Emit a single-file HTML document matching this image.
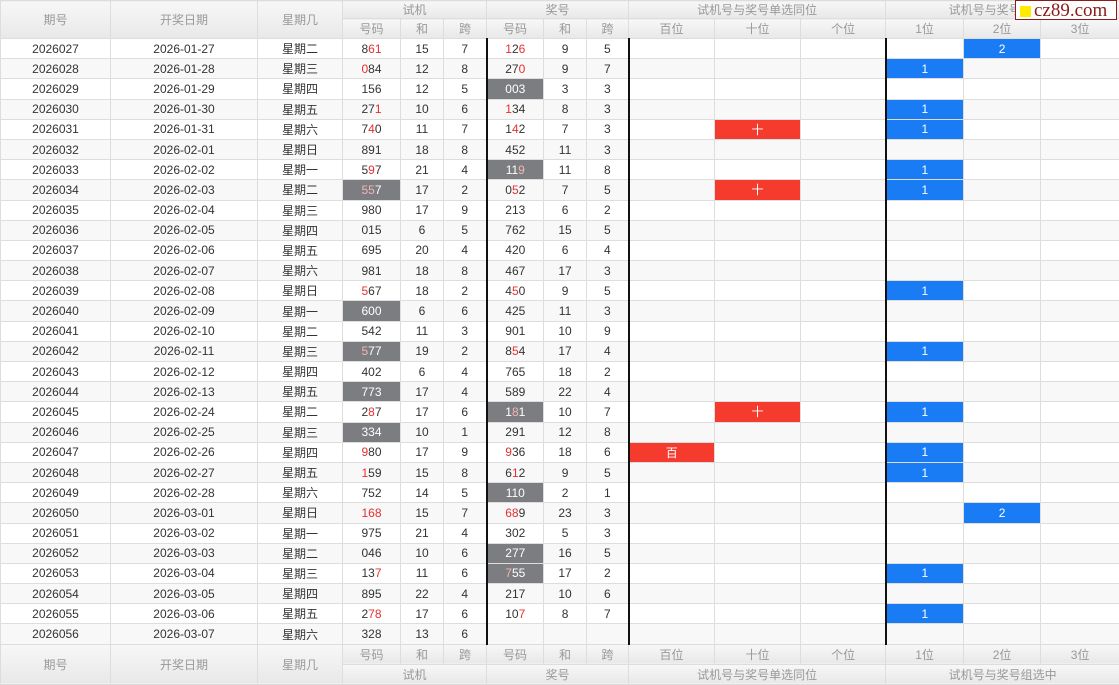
<!DOCTYPE html>
<html><head><meta charset="utf-8"><style>
body{margin:0;width:1119px;height:685px;overflow:hidden;background:#fff;font-family:"Liberation Sans","Noto Sans CJK SC",sans-serif;position:relative}
table{border-collapse:collapse;table-layout:fixed;width:1119px;font-size:12px;color:#333}
td,th{border:1px solid #ddd;text-align:center;padding:0;white-space:nowrap;overflow:hidden}
th{font-weight:normal;color:#999;background:linear-gradient(#f7f7f7,#e8e8e8);font-size:12px}
tr.h1 th{height:17px}
tr.h2 th{height:19px}
tbody tr{height:20.2px}
tbody tr:nth-child(even) td{background:#f8f8f8}
tbody td.g{background:#7b7d80!important;color:#fff}
tbody td.g i{color:#f5b5b5}
tbody td.b{background:#1a7cf5!important;color:#fff}
tbody td.r{background:#f53a2e!important;color:#fff}
i{font-style:normal;color:#e53030}
.L{border-left:2px solid #111!important}
tfoot th{height:19px}
.wm{position:absolute;left:1015px;top:0;width:102px;height:20px;border:1px solid #8b1a1a;background:#fff;font-family:"Liberation Serif",serif;font-size:19px;color:#8b1a1a;line-height:20px;box-sizing:border-box}
.wm b{display:inline-block;width:11px;height:11px;background:#ffea00;margin:0 3px 0 4px;vertical-align:-1px}
</style></head><body>
<table>
<colgroup><col style="width:110px"><col style="width:147px"><col style="width:85px"><col style="width:58px"><col style="width:43px"><col style="width:43px"><col style="width:57px"><col style="width:43px"><col style="width:42px"><col style="width:86px"><col style="width:86px"><col style="width:85px"><col style="width:78px"><col style="width:77px"><col style="width:79px"></colgroup>
<thead>
<tr class="h1"><th rowspan="2">期号</th><th rowspan="2">开奖日期</th><th rowspan="2">星期几</th><th colspan="3">试机</th><th colspan="3">奖号</th><th colspan="3">试机号与奖号单选同位</th><th colspan="3">试机号与奖号组选中</th></tr>
<tr class="h2"><th>号码</th><th>和</th><th>跨</th><th>号码</th><th>和</th><th>跨</th><th>百位</th><th>十位</th><th>个位</th><th>1位</th><th>2位</th><th>3位</th></tr>
</thead>
<tbody>
<tr><td>2026027</td><td>2026-01-27</td><td>星期二</td><td>8<i>61</i></td><td>15</td><td>7</td><td class="L"><i>1</i>2<i>6</i></td><td>9</td><td>5</td><td class="L"></td><td></td><td></td><td class="L"></td><td class="b">2</td><td></td></tr>
<tr><td>2026028</td><td>2026-01-28</td><td>星期三</td><td><i>0</i>84</td><td>12</td><td>8</td><td class="L">27<i>0</i></td><td>9</td><td>7</td><td class="L"></td><td></td><td></td><td class="L b">1</td><td></td><td></td></tr>
<tr><td>2026029</td><td>2026-01-29</td><td>星期四</td><td>156</td><td>12</td><td>5</td><td class="L g">003</td><td>3</td><td>3</td><td class="L"></td><td></td><td></td><td class="L"></td><td></td><td></td></tr>
<tr><td>2026030</td><td>2026-01-30</td><td>星期五</td><td>27<i>1</i></td><td>10</td><td>6</td><td class="L"><i>1</i>34</td><td>8</td><td>3</td><td class="L"></td><td></td><td></td><td class="L b">1</td><td></td><td></td></tr>
<tr><td>2026031</td><td>2026-01-31</td><td>星期六</td><td>7<i>4</i>0</td><td>11</td><td>7</td><td class="L">1<i>4</i>2</td><td>7</td><td>3</td><td class="L"></td><td class="r">十</td><td></td><td class="L b">1</td><td></td><td></td></tr>
<tr><td>2026032</td><td>2026-02-01</td><td>星期日</td><td>891</td><td>18</td><td>8</td><td class="L">452</td><td>11</td><td>3</td><td class="L"></td><td></td><td></td><td class="L"></td><td></td><td></td></tr>
<tr><td>2026033</td><td>2026-02-02</td><td>星期一</td><td>5<i>9</i>7</td><td>21</td><td>4</td><td class="L g">11<i>9</i></td><td>11</td><td>8</td><td class="L"></td><td></td><td></td><td class="L b">1</td><td></td><td></td></tr>
<tr><td>2026034</td><td>2026-02-03</td><td>星期二</td><td class="g"><i>55</i>7</td><td>17</td><td>2</td><td class="L">0<i>5</i>2</td><td>7</td><td>5</td><td class="L"></td><td class="r">十</td><td></td><td class="L b">1</td><td></td><td></td></tr>
<tr><td>2026035</td><td>2026-02-04</td><td>星期三</td><td>980</td><td>17</td><td>9</td><td class="L">213</td><td>6</td><td>2</td><td class="L"></td><td></td><td></td><td class="L"></td><td></td><td></td></tr>
<tr><td>2026036</td><td>2026-02-05</td><td>星期四</td><td>015</td><td>6</td><td>5</td><td class="L">762</td><td>15</td><td>5</td><td class="L"></td><td></td><td></td><td class="L"></td><td></td><td></td></tr>
<tr><td>2026037</td><td>2026-02-06</td><td>星期五</td><td>695</td><td>20</td><td>4</td><td class="L">420</td><td>6</td><td>4</td><td class="L"></td><td></td><td></td><td class="L"></td><td></td><td></td></tr>
<tr><td>2026038</td><td>2026-02-07</td><td>星期六</td><td>981</td><td>18</td><td>8</td><td class="L">467</td><td>17</td><td>3</td><td class="L"></td><td></td><td></td><td class="L"></td><td></td><td></td></tr>
<tr><td>2026039</td><td>2026-02-08</td><td>星期日</td><td><i>5</i>67</td><td>18</td><td>2</td><td class="L">4<i>5</i>0</td><td>9</td><td>5</td><td class="L"></td><td></td><td></td><td class="L b">1</td><td></td><td></td></tr>
<tr><td>2026040</td><td>2026-02-09</td><td>星期一</td><td class="g">600</td><td>6</td><td>6</td><td class="L">425</td><td>11</td><td>3</td><td class="L"></td><td></td><td></td><td class="L"></td><td></td><td></td></tr>
<tr><td>2026041</td><td>2026-02-10</td><td>星期二</td><td>542</td><td>11</td><td>3</td><td class="L">901</td><td>10</td><td>9</td><td class="L"></td><td></td><td></td><td class="L"></td><td></td><td></td></tr>
<tr><td>2026042</td><td>2026-02-11</td><td>星期三</td><td class="g"><i>5</i>77</td><td>19</td><td>2</td><td class="L">8<i>5</i>4</td><td>17</td><td>4</td><td class="L"></td><td></td><td></td><td class="L b">1</td><td></td><td></td></tr>
<tr><td>2026043</td><td>2026-02-12</td><td>星期四</td><td>402</td><td>6</td><td>4</td><td class="L">765</td><td>18</td><td>2</td><td class="L"></td><td></td><td></td><td class="L"></td><td></td><td></td></tr>
<tr><td>2026044</td><td>2026-02-13</td><td>星期五</td><td class="g">773</td><td>17</td><td>4</td><td class="L">589</td><td>22</td><td>4</td><td class="L"></td><td></td><td></td><td class="L"></td><td></td><td></td></tr>
<tr><td>2026045</td><td>2026-02-24</td><td>星期二</td><td>2<i>8</i>7</td><td>17</td><td>6</td><td class="L g">1<i>8</i>1</td><td>10</td><td>7</td><td class="L"></td><td class="r">十</td><td></td><td class="L b">1</td><td></td><td></td></tr>
<tr><td>2026046</td><td>2026-02-25</td><td>星期三</td><td class="g">334</td><td>10</td><td>1</td><td class="L">291</td><td>12</td><td>8</td><td class="L"></td><td></td><td></td><td class="L"></td><td></td><td></td></tr>
<tr><td>2026047</td><td>2026-02-26</td><td>星期四</td><td><i>9</i>80</td><td>17</td><td>9</td><td class="L"><i>9</i>36</td><td>18</td><td>6</td><td class="L r">百</td><td></td><td></td><td class="L b">1</td><td></td><td></td></tr>
<tr><td>2026048</td><td>2026-02-27</td><td>星期五</td><td><i>1</i>59</td><td>15</td><td>8</td><td class="L">6<i>1</i>2</td><td>9</td><td>5</td><td class="L"></td><td></td><td></td><td class="L b">1</td><td></td><td></td></tr>
<tr><td>2026049</td><td>2026-02-28</td><td>星期六</td><td>752</td><td>14</td><td>5</td><td class="L g">110</td><td>2</td><td>1</td><td class="L"></td><td></td><td></td><td class="L"></td><td></td><td></td></tr>
<tr><td>2026050</td><td>2026-03-01</td><td>星期日</td><td><i>168</i></td><td>15</td><td>7</td><td class="L"><i>68</i>9</td><td>23</td><td>3</td><td class="L"></td><td></td><td></td><td class="L"></td><td class="b">2</td><td></td></tr>
<tr><td>2026051</td><td>2026-03-02</td><td>星期一</td><td>975</td><td>21</td><td>4</td><td class="L">302</td><td>5</td><td>3</td><td class="L"></td><td></td><td></td><td class="L"></td><td></td><td></td></tr>
<tr><td>2026052</td><td>2026-03-03</td><td>星期二</td><td>046</td><td>10</td><td>6</td><td class="L g">277</td><td>16</td><td>5</td><td class="L"></td><td></td><td></td><td class="L"></td><td></td><td></td></tr>
<tr><td>2026053</td><td>2026-03-04</td><td>星期三</td><td>13<i>7</i></td><td>11</td><td>6</td><td class="L g"><i>7</i>55</td><td>17</td><td>2</td><td class="L"></td><td></td><td></td><td class="L b">1</td><td></td><td></td></tr>
<tr><td>2026054</td><td>2026-03-05</td><td>星期四</td><td>895</td><td>22</td><td>4</td><td class="L">217</td><td>10</td><td>6</td><td class="L"></td><td></td><td></td><td class="L"></td><td></td><td></td></tr>
<tr><td>2026055</td><td>2026-03-06</td><td>星期五</td><td>2<i>78</i></td><td>17</td><td>6</td><td class="L">10<i>7</i></td><td>8</td><td>7</td><td class="L"></td><td></td><td></td><td class="L b">1</td><td></td><td></td></tr>
<tr><td>2026056</td><td>2026-03-07</td><td>星期六</td><td>328</td><td>13</td><td>6</td><td class="L"></td><td></td><td></td><td class="L"></td><td></td><td></td><td class="L"></td><td></td><td></td></tr>
</tbody>
<tfoot>
<tr><th rowspan="2">期号</th><th rowspan="2">开奖日期</th><th rowspan="2">星期几</th><th>号码</th><th>和</th><th>跨</th><th>号码</th><th>和</th><th>跨</th><th>百位</th><th>十位</th><th>个位</th><th>1位</th><th>2位</th><th>3位</th></tr>
<tr><th colspan="3">试机</th><th colspan="3">奖号</th><th colspan="3">试机号与奖号单选同位</th><th colspan="3">试机号与奖号组选中</th></tr>
</tfoot>
</table>
<div class="wm"><b></b>cz89.com</div>
</body></html>
